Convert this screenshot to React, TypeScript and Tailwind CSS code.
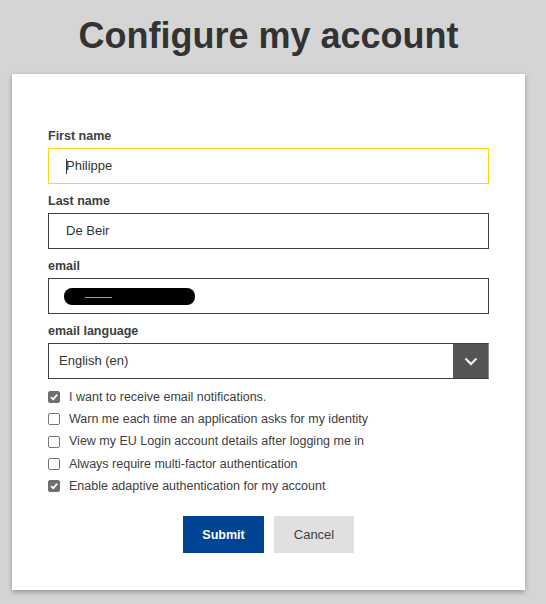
import React from 'react';

interface FieldProps {
  label: string;
  children: React.ReactNode;
}

const Field: React.FC<FieldProps> = ({ label, children }) => (
  <div className="mb-[8px]">
    <div className="h-[18px] leading-[18px] text-[12.5px] font-bold text-[#404040] mb-[3px]">{label}</div>
    {children}
  </div>
);

const Check: React.FC<{ checked?: boolean; label: string }> = ({ checked = false, label }) => (
  <div className="flex items-center h-[22.3px]">
    <span
      className={`w-[12px] h-[12px] rounded-[2px] border flex items-center justify-center shrink-0 ${
        checked ? 'bg-[#6f6f6f] border-[#6f6f6f]' : 'bg-white border-[#767676]'
      }`}
    >
      {checked && (
        <svg width="10" height="10" viewBox="0 0 10 10">
          <path d="M2 5.2 L4.2 7.3 L8.2 2.6" fill="none" stroke="#fff" strokeWidth="1.8" />
        </svg>
      )}
    </span>
    <span className="ml-[9px] text-[12.5px] text-[#404040]">{label}</span>
  </div>
);

export default function App() {
  const options = [
    { label: 'I want to receive email notifications.', checked: true },
    { label: 'Warn me each time an application asks for my identity', checked: false },
    { label: 'View my EU Login account details after logging me in', checked: false },
    { label: 'Always require multi-factor authentication', checked: false },
    { label: 'Enable adaptive authentication for my account', checked: true },
  ];

  return (
    <div
      className="w-[546px] h-[604px] bg-[#d5d5d5] overflow-hidden"
      style={{ fontFamily: '"Liberation Sans", Arial, sans-serif' }}
    >
      <div className="ml-[12px] w-[513px]">
        <h1 className="pt-[16px] h-[56px] leading-[40px] text-[36px] font-bold text-[#333] text-center">
          Configure my account
        </h1>
        <div className="mt-[18px] bg-white shadow-[0_2px_5px_rgba(0,0,0,0.3)] px-[36px] pt-[53px] pb-[37px]">
          <Field label="First name">
            <div className="h-[36px] border border-[#ffd617] flex items-center pl-[17px] text-[13px] text-[#333]">
              <span className="w-px h-[15px] bg-[#333] mr-[-1px]" />
              Philippe
            </div>
          </Field>
          <Field label="Last name">
            <div className="h-[36px] border border-[#404040] flex items-center pl-[17px] text-[13px] text-[#333]">
              De Beir
            </div>
          </Field>
          <Field label="email">
            <div className="h-[36px] border border-[#404040] flex items-center pl-[15px]">
              <div className="relative w-[131px] h-[17px] bg-black rounded-[8px]">
                <span className="absolute left-[21px] top-[9px] w-[27px] h-px bg-[#9a9a9a]" />
              </div>
            </div>
          </Field>
          <Field label="email language">
            <div className="h-[36px] border border-[#404040] border-r-[#8c8c8c] flex items-stretch">
              <div className="flex-1 flex items-center pl-[10px] text-[13px] text-[#333]">English (en)</div>
              <div className="w-[35px] bg-[#555555] flex items-center justify-center">
                <svg width="14" height="9" viewBox="0 0 14 9">
                  <path d="M1.5 1.5 L7 7 L12.5 1.5" fill="none" stroke="#fff" strokeWidth="2" />
                </svg>
              </div>
            </div>
          </Field>
          <div className="mt-[-1px]">
            {options.map((o) => (
              <Check key={o.label} label={o.label} checked={o.checked} />
            ))}
          </div>
          <div className="mt-[19px] flex justify-center gap-[10px]">
            <button className="w-[81px] h-[37px] bg-[#004494] text-white text-[12.5px] font-bold">Submit</button>
            <button className="w-[80px] h-[37px] bg-[#e0e0e0] text-[#404040] text-[13px]">Cancel</button>
          </div>
        </div>
      </div>
    </div>
  );
}
